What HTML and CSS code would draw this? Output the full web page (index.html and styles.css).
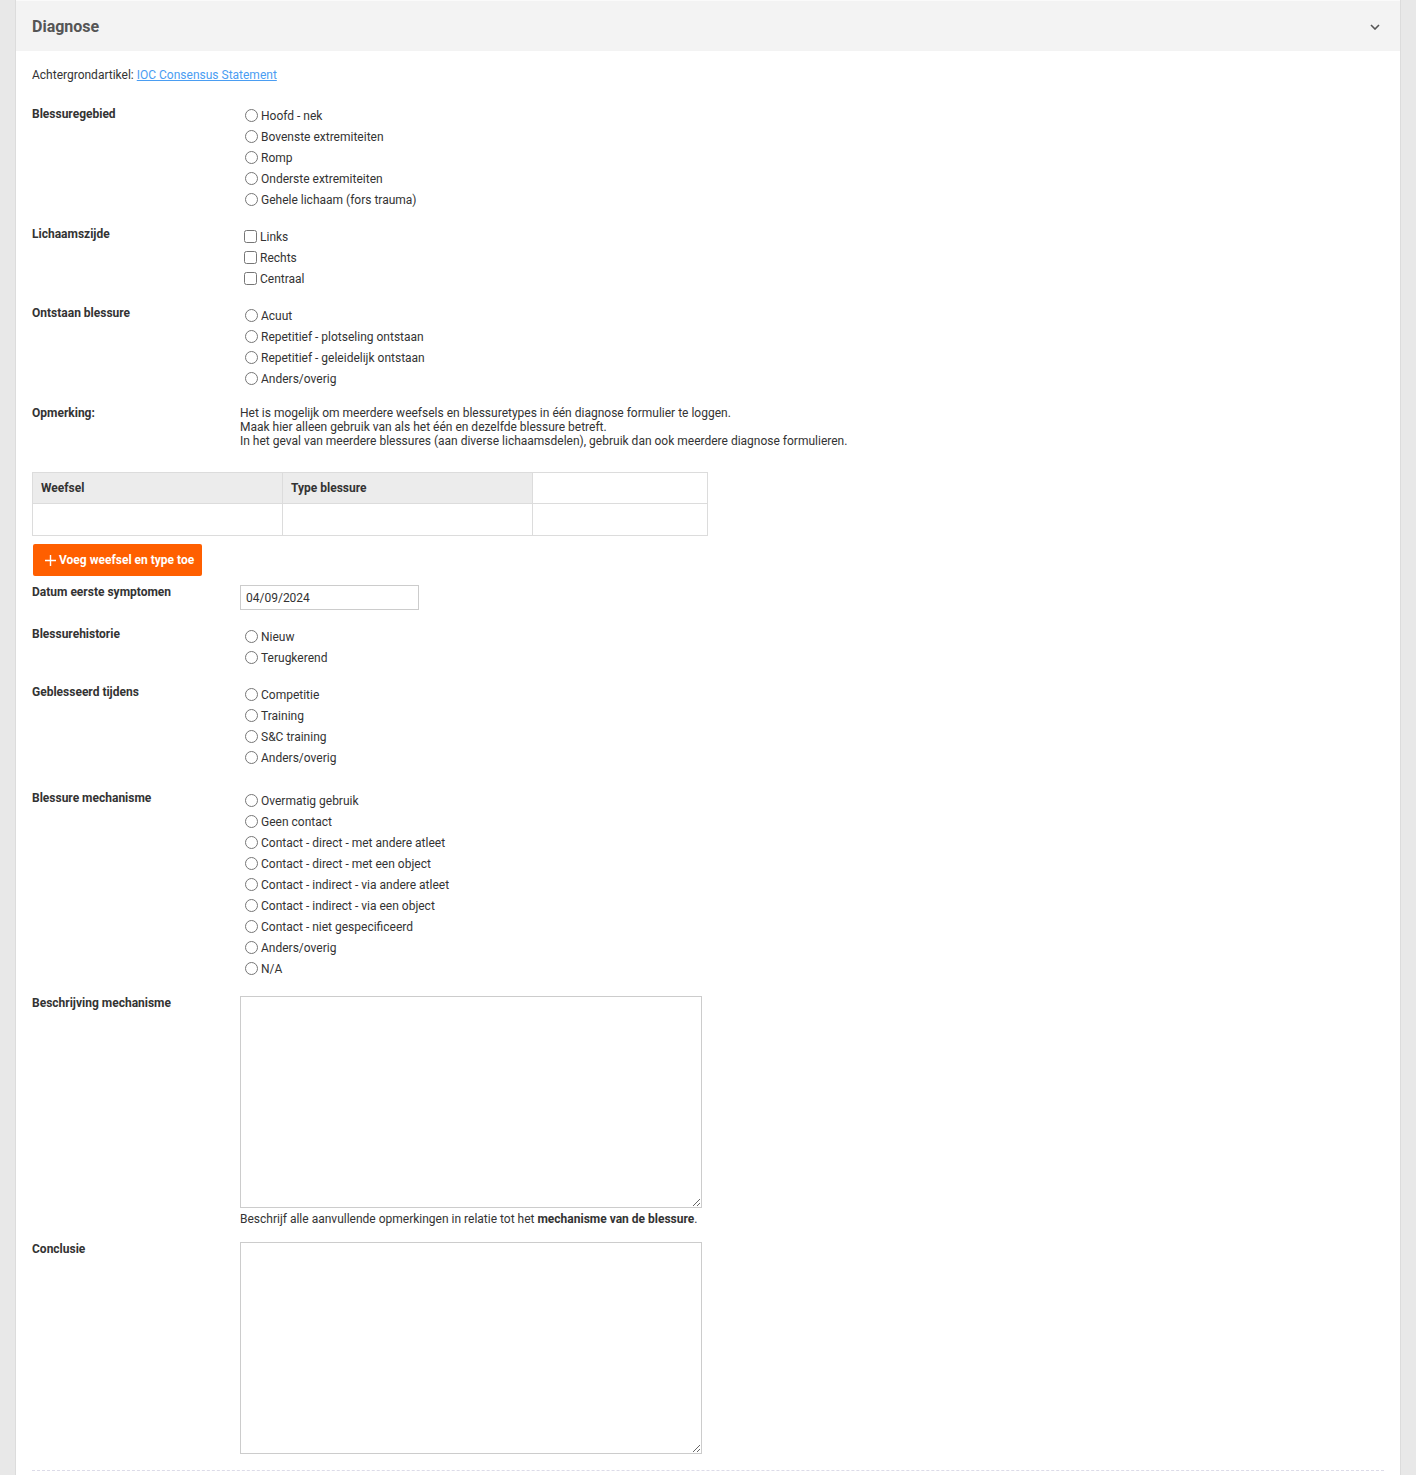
FILE: index.html
```html
<!DOCTYPE html>
<html lang="nl">
<head>
    <meta charset="UTF-8">
    <title>Diagnose</title>
    <link rel="stylesheet" href="styles.css">
</head>
<body>

<div class="panel">
    <div class="panel-head">
        <h2>Diagnose</h2>
        <svg class="chevron" width="10" height="6" viewBox="0 0 10 6"><path d="M1 1 L5 5 L9 1" fill="none" stroke="#555" stroke-width="1.6"/></svg>
    </div>

    <div class="panel-body">
        <p class="intro">Achtergrondartikel: <a href="#">IOC Consensus Statement</a></p>

        <div class="row row-first">
            <div class="label">Blessuregebied</div>
            <div class="options">
                <label class="opt"><input type="radio" name="gebied">Hoofd - nek</label>
                <label class="opt"><input type="radio" name="gebied">Bovenste extremiteiten</label>
                <label class="opt"><input type="radio" name="gebied">Romp</label>
                <label class="opt"><input type="radio" name="gebied">Onderste extremiteiten</label>
                <label class="opt"><input type="radio" name="gebied">Gehele lichaam (fors trauma)</label>
            </div>
        </div>

        <div class="row">
            <div class="label">Lichaamszijde</div>
            <div class="options">
                <label class="opt"><input type="checkbox">Links</label>
                <label class="opt"><input type="checkbox">Rechts</label>
                <label class="opt"><input type="checkbox">Centraal</label>
            </div>
        </div>

        <div class="row">
            <div class="label">Ontstaan blessure</div>
            <div class="options">
                <label class="opt"><input type="radio" name="ontstaan">Acuut</label>
                <label class="opt"><input type="radio" name="ontstaan">Repetitief - plotseling ontstaan</label>
                <label class="opt"><input type="radio" name="ontstaan">Repetitief - geleidelijk ontstaan</label>
                <label class="opt"><input type="radio" name="ontstaan">Anders/overig</label>
            </div>
        </div>

        <div class="row row-note">
            <div class="label">Opmerking:</div>
            <div class="note">
                Het is mogelijk om meerdere weefsels en blessuretypes in één diagnose formulier te loggen.<br>
                Maak hier alleen gebruik van als het één en dezelfde blessure betreft.<br>
                In het geval van meerdere blessures (aan diverse lichaamsdelen), gebruik dan ook meerdere diagnose formulieren.
            </div>
        </div>

        <table class="tissue">
            <thead>
                <tr><th>Weefsel</th><th>Type blessure</th><th class="blank"></th></tr>
            </thead>
            <tbody>
                <tr><td></td><td></td><td></td></tr>
            </tbody>
        </table>

        <button class="btn-add" type="button">
            <svg width="11" height="11" viewBox="0 0 11 11"><path d="M5.5 0 V11 M0 5.5 H11" stroke="#fff" stroke-width="1.4"/></svg>
            Voeg weefsel en type toe
        </button>

        <div class="row row-date">
            <div class="label">Datum eerste symptomen</div>
            <div><input class="date" type="text" value="04/09/2024"></div>
        </div>

        <div class="row">
            <div class="label">Blessurehistorie</div>
            <div class="options">
                <label class="opt"><input type="radio" name="historie">Nieuw</label>
                <label class="opt"><input type="radio" name="historie">Terugkerend</label>
            </div>
        </div>

        <div class="row row-wide">
            <div class="label">Geblesseerd tijdens</div>
            <div class="options">
                <label class="opt"><input type="radio" name="tijdens">Competitie</label>
                <label class="opt"><input type="radio" name="tijdens">Training</label>
                <label class="opt"><input type="radio" name="tijdens">S&amp;C training</label>
                <label class="opt"><input type="radio" name="tijdens">Anders/overig</label>
            </div>
        </div>

        <div class="row row-mech">
            <div class="label">Blessure mechanisme</div>
            <div class="options">
                <label class="opt"><input type="radio" name="mech">Overmatig gebruik</label>
                <label class="opt"><input type="radio" name="mech">Geen contact</label>
                <label class="opt"><input type="radio" name="mech">Contact - direct - met andere atleet</label>
                <label class="opt"><input type="radio" name="mech">Contact - direct - met een object</label>
                <label class="opt"><input type="radio" name="mech">Contact - indirect - via andere atleet</label>
                <label class="opt"><input type="radio" name="mech">Contact - indirect - via een object</label>
                <label class="opt"><input type="radio" name="mech">Contact - niet gespecificeerd</label>
                <label class="opt"><input type="radio" name="mech">Anders/overig</label>
                <label class="opt"><input type="radio" name="mech">N/A</label>
            </div>
        </div>

        <div class="row row-text">
            <div class="label">Beschrijving mechanisme</div>
            <div>
                <textarea></textarea>
                <div class="help">Beschrijf alle aanvullende opmerkingen in relatie tot het <b>mechanisme van de blessure</b>.</div>
            </div>
        </div>

        <div class="row row-text">
            <div class="label">Conclusie</div>
            <div>
                <textarea></textarea>
            </div>
        </div>

        <hr class="divider">
    </div>
</div>

</body>
</html>
```

FILE: styles.css
```css
body {
    margin: 0;
    background-color: #e8e8e8;
    font-family: Roboto, "Liberation Sans", sans-serif;
    font-size: 12px;
    color: #333;
}
.panel {
    margin-left: 15px;
    width: 1384px;
    min-height: 1475px;
    background-color: #fff;
    border-left: 1px solid #dcdcdc;
    border-right: 1px solid #dcdcdc;
}
.panel-head {
    height: 50px;
    border-top: 1px solid #fafafa;
    background-color: #f3f3f3;
    display: flex;
    align-items: center;
    justify-content: space-between;
    padding: 0 20px 0 16px;
}
.panel-head h2 {
    margin: 0;
    font-size: 16px;
    font-weight: 700;
    color: #555;
}
.chevron {
    margin-top: 1px;
}
.panel-body {
    padding: 0 16px;
}
.intro {
    margin: 0;
    padding-top: 17px;
    line-height: 14px;
    margin-bottom: 23px;
}
.intro a {
    color: #4a9df2;
}
.row {
    display: grid;
    grid-template-columns: 208px 1fr;
    margin-bottom: 16px;
}
.label {
    font-weight: 700;
    line-height: 14px;
    padding-top: 1px;
}
.row-first .label {
    padding-top: 2px;
}
.options {
    display: flex;
    flex-direction: column;
}
.opt {
    height: 21px;
    display: flex;
    align-items: center;
}
.opt input[type="radio"] {
    margin: 0 3px 0 5px;
}
.opt input[type="checkbox"] {
    margin: 0 3px 0 4px;
}
.row-note {
    margin-bottom: 24px;
}
.note {
    line-height: 14px;
    padding-top: 1px;
}
.tissue {
    width: 676px;
    border-collapse: collapse;
}
.tissue th, .tissue td {
    border: 1px solid #dcdcdc;
    padding: 0 8px;
    text-align: left;
}
.tissue th {
    height: 30px;
    background-color: #ececec;
    font-weight: 700;
    width: 233px;
}
.tissue th.blank {
    background-color: #fff;
    width: auto;
}
.tissue td {
    height: 31px;
}
.btn-add {
    margin: 8px 0 0 1px;
    height: 32px;
    padding: 0 8px 0 12px;
    border: none;
    border-radius: 2px;
    background-color: #ff5f00;
    color: #fff;
    font-family: inherit;
    font-size: 12px;
    font-weight: 700;
    display: flex;
    align-items: center;
    gap: 3px;
}
.row-date {
    margin-top: 9px;
    margin-bottom: 16px;
}
.row-date .label {
    padding-top: 0;
}
.date {
    width: 179px;
    height: 25px;
    box-sizing: border-box;
    border: 1px solid #ccc;
    padding: 0 5px;
    font-family: inherit;
    font-size: 12px;
    color: #333;
}
.row-wide {
    margin-bottom: 22px;
}
.row-mech {
    margin-bottom: 17px;
}
.row-text .label {
    padding-top: 0;
}
textarea {
    display: block;
    width: 462px;
    height: 212px;
    box-sizing: border-box;
    border: 1px solid #ccc;
    font-family: inherit;
}
.help {
    margin-top: 4px;
    line-height: 14px;
}
.divider {
    margin: 16px 0 0 0;
    border: none;
    border-top: 1px dashed #dcdbe8;
}
```
